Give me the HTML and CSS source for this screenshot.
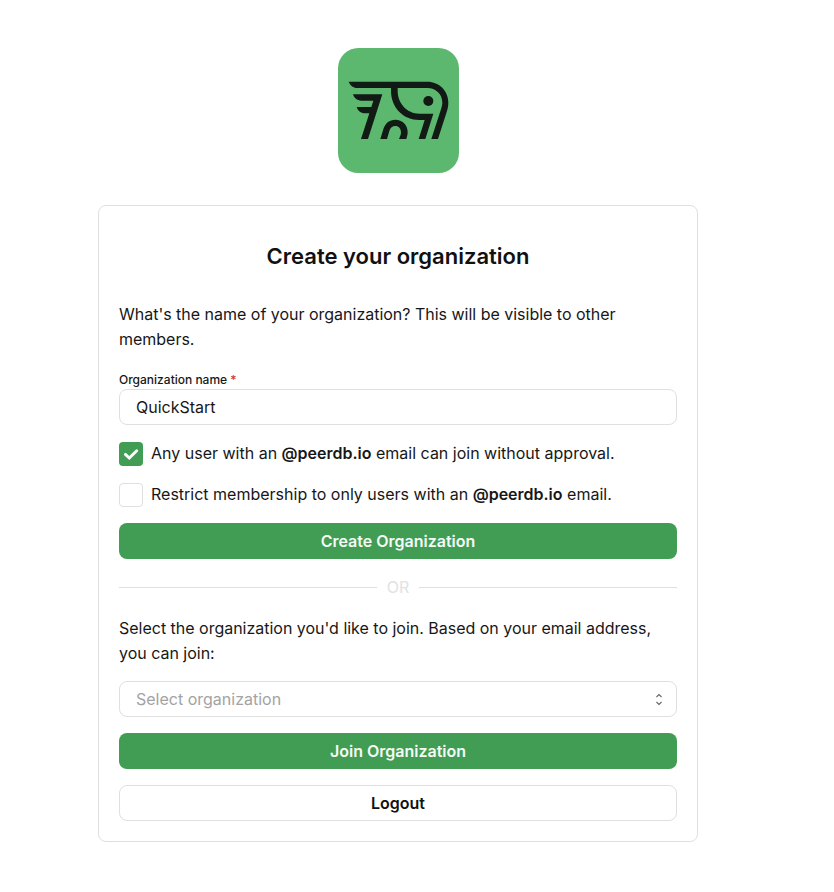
FILE: index.html
```html
<!DOCTYPE html>
<html lang="en">
<head>
<meta charset="utf-8">
<title>Create your organization</title>
<link rel="stylesheet" href="styles.css">
</head>
<body>
<main class="page">
  <svg class="logo" viewBox="30 24 363 375" role="img" aria-label="PeerDB">
    <rect x="30" y="24" width="363" height="375" rx="61" fill="#5cb86e"/>
    <g fill="#111a15">
      <path d="M62 125H298C334 125 361 153 361 187C361 199 359 207 356 216L330 297H310L339 208C341 201 343 195 343 188C343 163 324 144 298 144H88C75 144 66 136 62 125Z"/>
      <path d="M189 140H209V153C209 190 237 221 274 221H316L292 297H272L290 240H274C226 240 189 203 189 153Z"/>
      <path d="M75 163H163L120 297H99L124 220H111C98 220 89 212 86 201H130L136 182H100C87 182 78 174 75 163Z"/>
      <path d="M157 297L166 268C171 250 184 239 202 239C223 239 239 255 239 276C239 284 237 290 235 297H213C216 289 219 284 219 277C219 266 212 258 202 258C193 258 187 263 184 273L177 297Z"/>
      <circle cx="301" cy="183" r="15"/>
    </g>
  </svg>
  <form class="card">
    <h1 class="title">Create your organization</h1>
    <p class="text">What's the name of your organization? This will be visible to other members.</p>
    <div class="field">
      <label class="label" for="name">Organization name <span class="required">*</span></label>
      <input class="control" id="name" type="text" value="QuickStart">
    </div>
    <label class="option">
      <span class="box checked"><svg viewBox="0 0 24 24"><path d="M6.4 12.4L10.3 16.1L17.7 8.7"/></svg></span>
      <span>Any user with an <b>@peerdb.io</b> email can join without approval.</span>
    </label>
    <label class="option">
      <span class="box"></span>
      <span>Restrict membership to only users with an <b>@peerdb.io</b> email.</span>
    </label>
    <button class="button primary" type="button">Create Organization</button>
    <div class="divider">OR</div>
    <p class="text">Select the organization you'd like to join. Based on your email address, you can join:</p>
    <div class="control select">
      <span>Select organization</span>
      <svg class="chevrons" viewBox="0 0 8 14"><path d="M1.3 4.3L4 1.7L6.7 4.3M1.3 9.7L4 12.3L6.7 9.7"/></svg>
    </div>
    <button class="button primary" type="button">Join Organization</button>
    <button class="button logout" type="button">Logout</button>
  </form>
</main>
</body>
</html>
```

FILE: styles.css
```css
* {
  box-sizing: border-box;
}

body {
  margin: 0;
  background: #fff;
  color: #171717;
  font: 400 16px/25px Inter, "Liberation Sans", sans-serif;
}

.page {
  display: flex;
  flex-direction: column;
  align-items: center;
  gap: 32px;
  width: 796px;
  padding-top: 48px;
}

.logo {
  display: block;
  width: 121px;
  height: 125px;
}

.card {
  display: flex;
  flex-direction: column;
  gap: 16px;
  width: 600px;
  height: 637px;
  padding: 20px;
  border: 1px solid #dfdfdf;
  border-radius: 8px;
}

.title {
  margin: 0;
  color: #111;
  font-size: 22px;
  font-weight: 600;
  line-height: 60px;
  text-align: center;
}

.text {
  margin: 0;
  letter-spacing: -0.012px;
}

.field {
  display: flex;
  flex-direction: column;
  margin-top: 4px;
}

.label {
  padding-bottom: 2px;
  font-size: 12px;
  font-weight: 500;
  line-height: 15px;
}

.required {
  color: #d62f35;
}

.control {
  width: 100%;
  height: 36px;
  padding: 0 16px;
  border: 1px solid #dfdfdf;
  border-radius: 8px;
  background: #fff;
  color: inherit;
  font: inherit;
}

.option {
  display: flex;
  align-items: flex-end;
  gap: 8px;
}

.option b {
  font-weight: 600;
}

.box {
  width: 24px;
  height: 24px;
  border: 1px solid #dfdfdf;
  border-radius: 4px;
}

.box.checked {
  border: 0;
  background: #409d53;
}

.box svg {
  display: block;
  fill: none;
  stroke: #fff;
  stroke-width: 2.9;
  stroke-linecap: round;
}

.button {
  height: 36px;
  flex: none;
  padding: 0;
  border: 1px solid #dfdfdf;
  border-radius: 8px;
  background: #fff;
  color: #111;
  font: inherit;
  font-weight: 600;
}

.button.primary {
  border: 0;
  background: #409d53;
  color: #f4faf5;
}

.divider {
  display: flex;
  align-items: center;
  gap: 10px;
  height: 25px;
  color: #e2e2e2;
}

.divider::before,
.divider::after {
  content: "";
  flex: 1;
  height: 1px;
  background: #dfdfdf;
}

.select {
  display: flex;
  align-items: center;
  justify-content: space-between;
  margin-top: -1px;
  padding-right: 13px;
  color: #a3a3a3;
}

.chevrons {
  width: 8px;
  height: 13px;
  fill: none;
  stroke: #60646c;
  stroke-width: 1.2;
}
```
